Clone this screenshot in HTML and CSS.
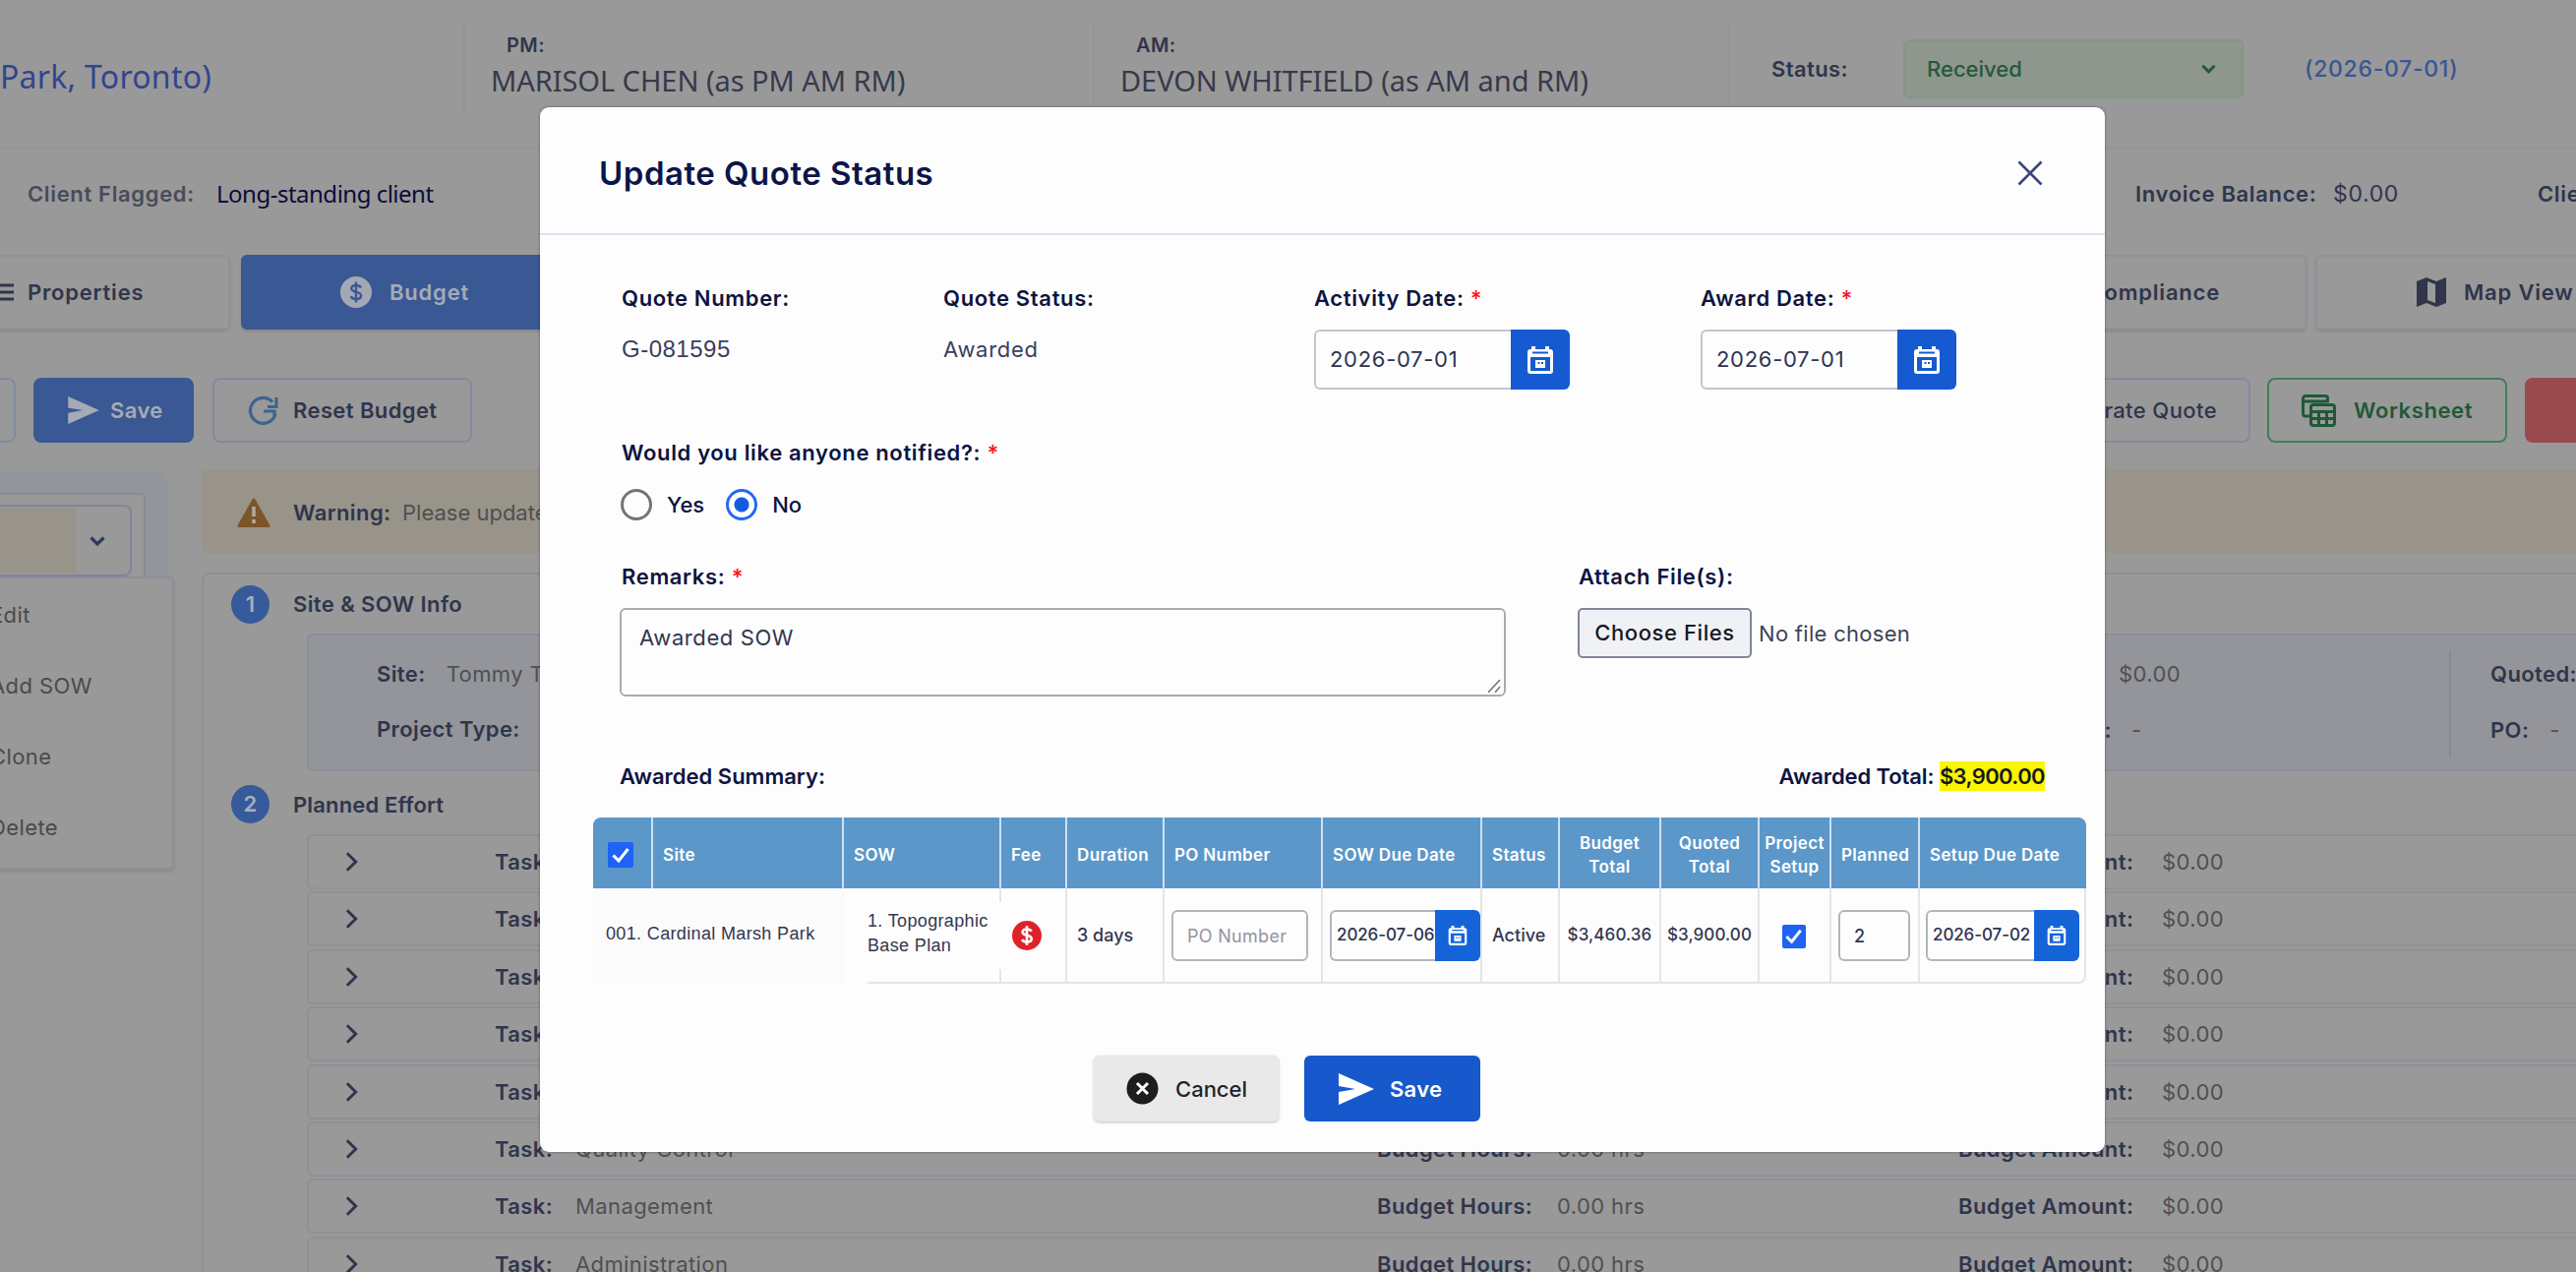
FILE: index.html
```
<!DOCTYPE html>
<html lang="en">
<head>
  <meta charset="UTF-8">
  <meta name="viewport" content="width=device-width, initial-scale=1.0">
  <title>Update Quote Status</title>
  <link rel="stylesheet" href="styles.css">
</head>
<body>
  <!-- icons -->
  <svg class="sprite" width="0" height="0">
    <symbol id="i-calendar" viewBox="0 0 26 28">
      <path fill="#fff" fill-rule="evenodd" d="M4 3V0h4v3h10V0h4v3h1a3 3 0 0 1 3 3v19a3 3 0 0 1-3 3H3a3 3 0 0 1-3-3V6a3 3 0 0 1 3-3zM3 11v14h20V11zM5 5.500v2h16v-2z"/>
      <path fill="#fff" fill-rule="evenodd" d="M8 14h10v8H8zM10.500 16v2h2v-2zM14 16v2h2v-2z"/>
    </symbol>
    <symbol id="i-send" viewBox="0 0 36 32">
      <path fill="currentColor" d="M0 0 36 16 0 32V19l17-3L0 13z"/>
    </symbol>
    <symbol id="i-check" viewBox="0 0 24 24">
      <path fill="none" stroke="#fff" stroke-width="3" d="M4.500 12.500 10 18 19.500 6"/>
    </symbol>
    <symbol id="i-down" viewBox="0 0 16 10">
      <path fill="none" stroke="currentColor" stroke-width="3.200" d="M1.500 1.500 8 8l6.500-6.500"/>
    </symbol>
    <symbol id="i-right" viewBox="0 0 14 22">
      <path fill="none" stroke="currentColor" stroke-width="3.200" d="M2 1.500 11.500 11 2 20.500"/>
    </symbol>
  </svg>

  <div class="page">
    <header class="topbar">
      <div class="topbar__site">Park, Toronto)</div>
      <div class="topbar__person">
        <span class="topbar__role">PM:</span>
        <span class="topbar__name">MARISOL CHEN (as PM AM RM)</span>
      </div>
      <div class="topbar__person">
        <span class="topbar__role">AM:</span>
        <span class="topbar__name">DEVON WHITFIELD (as AM and RM)</span>
      </div>
      <div class="topbar__status">
        <b>Status:</b>
        <div class="status-select">Received <svg width="15" height="10"><use href="#i-down"/></svg></div>
        <span class="topbar__date">(2026-07-01)</span>
      </div>
    </header>

    <div class="infobar">
      <b class="infobar__flag">Client Flagged:</b>
      <span class="infobar__client">Long-standing client</span>
      <b>Invoice Balance:</b>
      <span class="infobar__amount">$0.00</span>
      <b>Client</b>
    </div>

    <nav class="tabs">
      <div class="tab tab--properties">
        <svg width="24" height="18"><path stroke="currentColor" stroke-width="3" d="M0 2h24M0 9h24M0 16h24"/></svg>
        Properties
      </div>
      <div class="tab tab--active">
        <svg width="32" height="32" viewBox="0 0 32 32">
          <circle cx="16" cy="16" r="16" fill="#a3a9b3"/>
          <path fill="none" stroke="#3a5894" stroke-width="2.400" d="M21 11.500c-.8-1.800-2.600-2.500-5-2.500-2.800 0-4.700 1.200-4.700 3.300 0 4.800 9.800 2.200 9.800 7.200 0 2.200-2.200 3.500-5.100 3.500-2.600 0-4.500-1-5.200-2.800M16 5.500v21"/>
        </svg>
        Budget
      </div>
      <div class="tab tab--compliance">Compliance</div>
      <div class="tab tab--map">
        <svg width="30" height="30" viewBox="0 0 30 30">
          <path fill="currentColor" fill-rule="evenodd" d="M0 4 10 0l10 4 10-4v26l-10 4-10-4-10 4zM11 4v19l8 3V7z"/>
        </svg>
        Map View
      </div>
    </nav>

    <div class="toolbar">
      <div class="tool tool--stub"></div>
      <div class="tool tool--save"><svg width="34" height="28"><use href="#i-send"/></svg>Save</div>
      <div class="tool tool--reset">
        <svg width="31" height="31" viewBox="0 0 31 31">
          <path fill="none" stroke="#3c648f" stroke-width="3.200" d="M25 6.500A13 13 0 1 0 28 19M29 2v9.500h-9M16 16h11v5"/>
        </svg>
        Reset Budget
      </div>
      <div class="tool tool--quote">Generate Quote</div>
      <div class="tool tool--worksheet">
        <svg width="35" height="33" viewBox="0 0 35 33">
          <path fill="none" stroke="currentColor" stroke-width="3" d="M8 22H4a2.500 2.500 0 0 1-2.500-2.500V4A2.500 2.500 0 0 1 4 1.500h20A2.500 2.500 0 0 1 26.500 4v4M1.500 7h25"/>
          <path fill="none" stroke="currentColor" stroke-width="3" d="M12 10.500h19a2.500 2.500 0 0 1 2.500 2.500v16a2.500 2.500 0 0 1-2.500 2.500H12A2.500 2.500 0 0 1 9.500 29V13a2.500 2.500 0 0 1 2.500-2.500zM9.500 17.500h24M9.500 24.500h24M17.500 17v14M25.500 17v14"/>
        </svg>
        Worksheet
      </div>
      <div class="tool tool--danger"></div>
    </div>

    <div class="main">
      <aside class="side">
        <div class="side__box">
          <div class="side__select">
            <div class="side__value"></div>
            <svg width="16" height="10"><use href="#i-down"/></svg>
          </div>
        </div>
        <ul class="side__menu">
          <li>Edit</li>
          <li>Add SOW</li>
          <li>Clone</li>
          <li>Delete</li>
        </ul>
      </aside>

      <section class="content">
        <div class="warning">
          <svg width="34" height="30" viewBox="0 0 34 30">
            <path fill="#7c552a" stroke="#7c552a" stroke-width="3" stroke-linejoin="round" d="M17 2 32 28.500H2z"/>
            <path stroke="#b3aa9c" stroke-width="3.600" d="M17 9v10M17 22v4"/>
          </svg>
          <b>Warning:</b>
          <span>Please update</span>
        </div>

        <div class="card">
          <h3 class="card__title"><i>1</i>Site &amp; SOW Info</h3>
          <div class="site">
            <div class="site__line"><b>Site:</b><span>Tommy T</span></div>
            <div class="site__line"><b>Project Type:</b><span>-</span></div>
            <div class="site__mid">
              <div><b></b><span>$0.00</span></div>
              <div><b>Date:</b><span class="dash">-</span></div>
            </div>
            <div class="site__last">
              <div><b>Quoted:</b></div>
              <div><b>PO:</b><span>-</span></div>
            </div>
          </div>

          <h3 class="card__title card__title--effort"><i>2</i>Planned Effort</h3>
          <div class="tasks">
            <div class="task"><svg width="13" height="22"><use href="#i-right"/></svg><b>Task:</b><span></span><b></b><span></span><b>Budget Amount:</b><span>$0.00</span></div>
            <div class="task"><svg width="13" height="22"><use href="#i-right"/></svg><b>Task:</b><span></span><b></b><span></span><b>Budget Amount:</b><span>$0.00</span></div>
            <div class="task"><svg width="13" height="22"><use href="#i-right"/></svg><b>Task:</b><span></span><b></b><span></span><b>Budget Amount:</b><span>$0.00</span></div>
            <div class="task"><svg width="13" height="22"><use href="#i-right"/></svg><b>Task:</b><span></span><b></b><span></span><b>Budget Amount:</b><span>$0.00</span></div>
            <div class="task"><svg width="13" height="22"><use href="#i-right"/></svg><b>Task:</b><span></span><b></b><span></span><b>Budget Amount:</b><span>$0.00</span></div>
            <div class="task"><svg width="13" height="22"><use href="#i-right"/></svg><b>Task:</b><span>Quality Control</span><b>Budget Hours:</b><span>0.00 hrs</span><b>Budget Amount:</b><span>$0.00</span></div>
            <div class="task"><svg width="13" height="22"><use href="#i-right"/></svg><b>Task:</b><span>Management</span><b>Budget Hours:</b><span>0.00 hrs</span><b>Budget Amount:</b><span>$0.00</span></div>
            <div class="task"><svg width="13" height="22"><use href="#i-right"/></svg><b>Task:</b><span>Administration</span><b>Budget Hours:</b><span>0.00 hrs</span><b>Budget Amount:</b><span>$0.00</span></div>
          </div>
        </div>
      </section>
    </div>
  </div>

  <div class="modal" role="dialog">
    <div class="modal__header">
      <h2 class="modal__title">Update Quote Status</h2>
      <svg class="modal__close" width="26" height="26" viewBox="0 0 26 26">
        <path stroke="#3a4676" stroke-width="2.600" d="M1.500 1.500l23 23M24.500 1.500l-23 23"/>
      </svg>
    </div>

    <div class="modal__body">
      <div class="fields">
        <div>
          <div class="label">Quote Number:</div>
          <div class="value value--number">G-081595</div>
        </div>
        <div>
          <div class="label">Quote Status:</div>
          <div class="value">Awarded</div>
        </div>
        <div>
          <div class="label">Activity Date: <em>*</em></div>
          <div class="date"><span>2026-07-01</span><i><svg width="26" height="28"><use href="#i-calendar"/></svg></i></div>
        </div>
        <div>
          <div class="label">Award Date: <em>*</em></div>
          <div class="date"><span>2026-07-01</span><i><svg width="26" height="28"><use href="#i-calendar"/></svg></i></div>
        </div>
      </div>

      <div class="notify">
        <div class="label">Would you like anyone notified?: <em>*</em></div>
        <div class="radios">
          <span class="radio"></span>Yes
          <span class="radio radio--on"></span>No
        </div>
      </div>

      <div class="remarks">
        <div>
          <div class="label">Remarks: <em>*</em></div>
          <div class="textarea">
            Awarded SOW
            <svg width="13" height="13"><path stroke="#777" stroke-width="1.600" d="M0 13 12 0M7 13l5-6"/></svg>
          </div>
        </div>
        <div>
          <div class="label label--files">Attach File(s):</div>
          <div class="file"><span class="file__btn">Choose Files</span>No file chosen</div>
        </div>
      </div>

      <div class="summary">
        <span>Awarded Summary:</span>
        <span class="summary__total">Awarded Total: <mark>$3,900.00</mark></span>
      </div>

      <table class="awards">
        <colgroup>
          <col class="c-check"><col class="c-site"><col class="c-sow"><col class="c-fee"><col class="c-dur"><col class="c-po"><col class="c-due">
          <col class="c-status"><col class="c-budget"><col class="c-quoted"><col class="c-setup"><col class="c-planned"><col class="c-sdue">
        </colgroup>
        <thead>
          <tr>
            <th class="awards__all"><span class="checkbox"><svg width="24" height="24"><use href="#i-check"/></svg></span></th>
            <th>Site</th>
            <th>SOW</th>
            <th>Fee</th>
            <th>Duration</th>
            <th>PO Number</th>
            <th>SOW Due Date</th>
            <th>Status</th>
            <th class="center">Budget<br>Total</th>
            <th class="center">Quoted<br>Total</th>
            <th class="center">Project<br>Setup</th>
            <th>Planned</th>
            <th>Setup Due Date</th>
          </tr>
        </thead>
        <tbody>
          <tr>
            <td class="awards__site" colspan="2">001. Cardinal Marsh Park</td>
            <td class="awards__sow">1. Topographic<br>Base Plan</td>
            <td class="awards__fee">
              <svg width="30" height="30" viewBox="0 0 32 32">
                <circle cx="16" cy="16" r="16" fill="#df2229"/>
                <path fill="none" stroke="#fff" stroke-width="2.800" d="M21 11.500c-.8-1.800-2.600-2.500-5-2.500-2.800 0-4.700 1.200-4.700 3.300 0 4.800 9.800 2.200 9.800 7.200 0 2.200-2.200 3.500-5.100 3.500-2.600 0-4.500-1-5.200-2.800M16 5.500v21"/>
              </svg>
            </td>
            <td>3 days</td>
            <td class="tight"><div class="input input--po">PO Number</div></td>
            <td class="tight"><div class="date date--small"><span>2026-07-06</span><i><svg width="20" height="20"><use href="#i-calendar"/></svg></i></div></td>
            <td>Active</td>
            <td class="center money">$3,460.36</td>
            <td class="center money">$3,900.00</td>
            <td class="center"><span class="checkbox checkbox--row"><svg width="23" height="23"><use href="#i-check"/></svg></span></td>
            <td class="tight"><div class="input input--planned">2</div></td>
            <td class="tight"><div class="date date--small date--setup"><span>2026-07-02</span><i><svg width="20" height="20"><use href="#i-calendar"/></svg></i></div></td>
          </tr>
        </tbody>
      </table>

      <div class="actions">
        <div class="btn btn--cancel">
          <svg width="33" height="33" viewBox="0 0 33 33"><circle cx="16.500" cy="16.500" r="16" fill="#1d1d20"/><path stroke="#fff" stroke-width="3" d="M11 11l11 11M22 11 11 22"/></svg>
          Cancel
        </div>
        <div class="btn btn--save"><svg width="36" height="32"><use href="#i-send"/></svg>Save</div>
      </div>
    </div>
  </div>
</body>
</html>
```

FILE: styles.css
```
* {
  box-sizing: border-box;
}
body {
  margin: 0;
  background-color: #999;
  color: #30354c;
  font-family: Inter, "Liberation Sans", sans-serif;
  font-size: 22px;
  line-height: 30px;
}
b {
  font-weight: 600;
}
svg {
  display: block;
  flex: none;
}
.sprite {
  position: absolute;
}

.page {
  width: 2619px;
  height: 1293px;
  overflow: hidden;
  letter-spacing: .4px;
  white-space: nowrap;
}

/* top bar */
.topbar {
  display: grid;
  grid-template-columns: 471px 640px 646px 1fr;
  height: 151px;
  padding-top: 23px;
  border-bottom: 2px solid #92949b;
}
.topbar > div + div {
  height: 94px;
  border-left: 2px solid #92949a;
}
.topbar__site {
  padding-top: 40px;
  color: #33448f;
  font-family: "Noto Sans", sans-serif;
  font-size: 32px;
  letter-spacing: .25px;
}
.topbar__person {
  display: flex;
  flex-direction: column;
  padding: 8px 0 0 26px;
}
.topbar__role {
  padding-left: 16px;
  font-size: 20px;
  font-weight: 600;
}
.topbar__name {
  margin-top: 6px;
  color: #37394b;
  font-family: "Noto Sans", sans-serif;
  font-size: 29px;
  letter-spacing: -.05px;
}
.topbar__status {
  display: flex;
  align-items: center;
  padding-left: 42px;
}
.topbar__status b {
  width: 134px;
}
.status-select {
  display: flex;
  align-items: center;
  justify-content: space-between;
  width: 346px;
  height: 60px;
  padding: 0 26px 0 22px;
  border: 2px solid #839685;
  border-radius: 6px;
  background-color: #8f968e;
  color: #225a39;
  font-weight: 500;
  letter-spacing: 0;
}
.topbar__date {
  margin-left: 62px;
  color: #385794;
  font-size: 23px;
  font-weight: 500;
  letter-spacing: .7px;
}

.infobar {
  display: grid;
  grid-template-columns: 192px 1951px 201px 208px 1fr;
  align-items: center;
  height: 92px;
  padding-left: 28px;
  letter-spacing: .65px;
}
.infobar__flag {
  color: #484c59;
}
.infobar__client {
  color: #0d0b3a;
  font-family: "Noto Sans", sans-serif;
  font-size: 24px;
  letter-spacing: -.5px;
}
.infobar__amount {
  font-size: 23px;
}

/* tabs */
.tabs {
  display: flex;
  margin-top: 16px;
  letter-spacing: .8px;
}
.tab {
  display: flex;
  flex: none;
  align-items: center;
  height: 76px;
  border: 2px solid #919298;
  border-radius: 6px;
  box-shadow: 0 2px 3px rgba(0, 0, 0, .12);
  font-weight: 600;
}
.tab--properties {
  gap: 14px;
  width: 354px;
  margin-left: -120px;
  padding-left: 108px;
}
.tab--active {
  gap: 18px;
  width: 355px;
  margin-left: 11px;
  padding-left: 99px;
  border-color: #3a5894;
  background-color: #3a5894;
  color: #a5abb6;
}
.tab--compliance {
  justify-content: flex-end;
  width: 354px;
  margin-left: 1391px;
  padding-right: 86px;
}
.tab--map {
  gap: 18px;
  width: 354px;
  margin-left: 9px;
  padding-left: 101px;
}

.toolbar {
  display: flex;
  margin-top: 49px;
}
.tool {
  display: flex;
  flex: none;
  align-items: center;
  height: 66px;
  border: 2px solid #808ba0;
  border-radius: 8px;
  font-weight: 600;
}
.tool--stub {
  width: 66px;
  margin-left: -50px;
}
.tool--save {
  gap: 10px;
  width: 163px;
  margin-left: 18px;
  padding-left: 32px;
  border-color: #3a5894;
  background-color: #3a5894;
  color: #a5abb6;
}
.tool--reset {
  gap: 15px;
  width: 264px;
  margin-left: 19px;
  padding-left: 34px;
}
.tool--quote {
  justify-content: flex-end;
  width: 264px;
  margin-left: 1544px;
  padding-right: 32px;
  font-weight: 500;
}
.tool--worksheet {
  gap: 18px;
  width: 244px;
  margin-left: 17px;
  padding-left: 33px;
  border-color: #457c59;
  color: #1f5937;
  letter-spacing: .6px;
}
.tool--danger {
  width: 200px;
  margin-left: 18px;
  border-color: #994a4f;
  background-color: #994a4f;
}

/* main area */
.main {
  display: grid;
  grid-template-columns: 205px 1fr;
  margin-top: 27px;
}
.side {
  position: relative;
  width: 170px;
  height: 300px;
  margin-top: 2px;
  padding-top: 22px;
  border-radius: 0 6px 0 0;
  background-color: #92959c;
}
.side__box {
  width: 148px;
  height: 90px;
  padding-top: 10px;
  border: 2px solid #888c99;
  border-left: 0;
  border-radius: 0 4px 0 0;
  background-color: #999;
}
.side__select {
  display: flex;
  align-items: center;
  width: 134px;
  height: 73px;
  border: 2px solid #7e869e;
  border-left: 0;
  border-radius: 0 8px 8px 0;
  color: #2e3a63;
}
.side__value {
  width: 77px;
  height: 67px;
  margin-right: 14px;
  background-color: #99948a;
}
.side__menu {
  position: absolute;
  top: 107px;
  left: 0;
  width: 177px;
  height: 298px;
  margin: 0;
  padding: 22px 0 0;
  border: 2px solid #8c8f9a;
  border-left: 0;
  border-radius: 0 6px 6px 0;
  background-color: #999;
  box-shadow: 0 2px 4px rgba(0, 0, 0, .12);
  color: #4a4a4c;
  list-style: none;
}
.side__menu li {
  height: 72px;
  margin-left: -10px;
}

.warning {
  display: flex;
  align-items: center;
  height: 85px;
  padding: 2px 0 0 36px;
  border-radius: 8px 0 0 8px;
  background-color: #99948a;
}
.warning b {
  width: 111px;
  margin-left: 23px;
}
.warning span {
  color: #4f4f50;
  letter-spacing: 0;
}

.card {
  height: 800px;
  margin-top: 20px;
  border: 2px solid #8c8f9b;
  border-right: 0;
  border-radius: 8px 0 0 0;
}
.card__title {
  display: flex;
  align-items: center;
  height: 60px;
  margin: 0;
  padding-left: 28px;
  font-size: 22px;
  font-weight: 600;
}
.card__title i {
  width: 39px;
  height: 39px;
  margin-right: 24px;
  border-radius: 50%;
  background-color: #375a9b;
  color: #a8afbc;
  font-style: normal;
  line-height: 39px;
  text-align: center;
}
.card__title--effort {
  height: 64px;
  padding-top: 3px;
  letter-spacing: .15px;
}
.site {
  display: grid;
  grid-template-columns: 1743px 433px 1fr;
  grid-template-rows: 56px 56px;
  height: 140px;
  margin-left: 105px;
  padding-top: 12px;
  border: 2px solid #8a8e99;
  border-right: 0;
  border-radius: 6px 0 0 6px;
  background-color: #93959a;
}
.site span,
.task span {
  color: #4f5052;
}
.site__line {
  grid-column: 1;
  padding: 12px 0 0 69px;
}
.site__line b {
  margin-right: 21px;
}
.site__mid,
.site__last {
  grid-row: 1 / 3;
}
.site__mid {
  grid-column: 2;
  padding-top: 12px;
}
.site__mid div {
  display: flex;
  height: 57px;
}
.site__mid b {
  width: 90px;
  margin-right: 7px;
  text-align: right;
}
.site__mid .dash {
  margin-left: 13px;
}
.site__last {
  grid-column: 3;
  height: 107px;
  margin-top: 4px;
  padding: 8px 0 0 40px;
  border-left: 2px solid #868a97;
}
.site__last div {
  height: 57px;
}
.site__last span {
  margin-left: 21px;
}
.task {
  display: grid;
  grid-template-columns: 152px 82px 815px 183px 408px 207px 1fr;
  align-items: center;
  height: 56px;
  margin: 0 0 2.400px 105px;
  padding-left: 37px;
  border: 2px solid #8f9198;
  border-right: 0;
  border-radius: 6px 0 0 6px;
}

/* modal */
.modal {
  position: absolute;
  top: 109px;
  left: 549px;
  width: 1591px;
  height: 1062px;
  border-radius: 9px;
  background-color: #fdfdfe;
  box-shadow: 0 0 3px rgba(0, 0, 0, .4);
  color: #0d1440;
  white-space: nowrap;
}
.modal__header {
  display: flex;
  align-items: center;
  justify-content: space-between;
  height: 130px;
  padding: 5px 63px 0 60px;
  border-bottom: 2px solid #dce2f1;
}
.modal__title {
  margin: 0;
  color: #0c1549;
  font-size: 33px;
  font-weight: 600;
  letter-spacing: .5px;
}
.modal__body {
  padding: 49px 0 0 54px;
}
.label {
  font-weight: 600;
  letter-spacing: .65px;
}
.label em {
  color: #fb141c;
  font-style: normal;
}
.label--files {
  margin-left: -1px;
}
.value {
  margin-top: 22px;
  color: #3a3f5c;
  letter-spacing: .7px;
}
.value--number {
  font-family: "Liberation Sans", sans-serif;
  font-size: 24px;
  letter-spacing: .5px;
}
.fields {
  display: grid;
  grid-template-columns: 327px 377px 393px 1fr;
  padding-left: 29px;
}
.date {
  display: flex;
  width: 260px;
  height: 61px;
  margin-top: 17px;
  color: #2e3350;
}
.date span {
  flex: 1;
  padding: 13px 0 0 14px;
  border: 2px solid #c3c6cf;
  border-right: 0;
  border-radius: 6px 0 0 6px;
  letter-spacing: .7px;
}
.date i {
  display: flex;
  align-items: center;
  justify-content: center;
  width: 60px;
  border-radius: 0 6px 6px 0;
  background-color: #155ad0;
}

.notify {
  margin-top: 49px;
  padding-left: 29px;
}
.radios {
  display: flex;
  align-items: center;
  height: 32px;
  margin-top: 22px;
  font-weight: 500;
}
.radio {
  width: 32px;
  height: 32px;
  margin-right: 15px;
  margin-left: -1px;
  border: 3px solid #72747c;
  border-radius: 50%;
}
.radio--on {
  margin-left: 22px;
  border-color: #2468f5;
  background: radial-gradient(circle, #155be0 7px, #fff 8px);
}

.remarks {
  display: grid;
  grid-template-columns: 901px 1fr;
  gap: 73px;
  margin-top: 42px;
  padding-left: 27px;
}
.remarks .label {
  padding-left: 2px;
}
.textarea {
  display: flex;
  justify-content: space-between;
  height: 90px;
  margin-top: 17px;
  padding: 13px 3px 0 18px;
  border: 2px solid #a9abaf;
  border-radius: 6px;
  color: #32364f;
  letter-spacing: .6px;
}
.textarea svg {
  margin-top: 58px;
}
.file {
  display: flex;
  align-items: center;
  gap: 7px;
  margin-top: 17px;
  color: #3e4258;
  letter-spacing: .3px;
}
.file__btn {
  width: 177px;
  height: 51px;
  border: 2px solid #7f8698;
  border-radius: 5px;
  background-color: #f0f1f5;
  color: #17181f;
  font-weight: 500;
  letter-spacing: .6px;
  line-height: 46px;
  text-align: center;
}

.summary {
  display: flex;
  justify-content: space-between;
  margin-top: 66px;
  padding: 0 61px 0 27px;
  font-weight: 600;
}
.summary__total {
  letter-spacing: -.1px;
}
.summary mark {
  padding: 2px 0;
  background-color: #faf500;
  color: #17181f;
  letter-spacing: -.6px;
}

.awards {
  width: 1518px;
  margin-top: 27px;
  border-spacing: 0;
  table-layout: fixed;
  color: #33374f;
  font-size: 18px;
  line-height: 25px;
}
.c-check { width: 61px; }
.c-site { width: 194px; }
.c-sow { width: 160px; }
.c-fee { width: 67px; }
.c-dur { width: 99px; }
.c-po { width: 161px; }
.c-due { width: 162px; }
.c-status { width: 79px; }
.c-budget { width: 103px; }
.c-quoted { width: 100px; }
.c-setup { width: 73px; }
.c-planned { width: 90px; }
.c-sdue { width: 169px; }
.awards th {
  height: 72px;
  padding: 4px 0 0 10px;
  border-right: 2px solid #cfe0ef;
  background-color: #5c97c9;
  color: #fff;
  font-size: 17px;
  font-weight: 600;
  letter-spacing: .35px;
  line-height: 24px;
  text-align: left;
}
.awards th:first-child {
  padding-left: 15px;
  border-radius: 8px 0 0 0;
}
.awards th:last-child {
  border-right: 0;
  border-radius: 0 8px 0 0;
}
.awards td {
  height: 97px;
  padding: 0 0 0 10px;
  border-right: 2px solid #e4e5e8;
  border-bottom: 2px solid #e4e5e8;
  font-weight: 500;
}
.awards td:last-child {
  border-radius: 0 0 8px 0;
}
.awards .center {
  padding-left: 0;
  text-align: center;
}
.awards .tight {
  padding-left: 7px;
}
.awards .tight:last-child {
  padding-left: 6px;
}
.awards .awards__site {
  padding: 0 0 4px 13px;
  border: 0;
  background-color: #fbfbfc;
  font-family: "Liberation Sans", sans-serif;
  font-weight: 400;
  letter-spacing: .35px;
}
/* the separators only show in the corners of this cell */
.awards .awards__sow {
  padding: 0 0 5px 24px;
  border: 0;
  background:
    linear-gradient(#e4e5e8, #e4e5e8) 24px 100% / 100% 2px no-repeat,
    linear-gradient(#e4e5e8, #e4e5e8) 100% 0 / 2px 14px no-repeat,
    linear-gradient(#e4e5e8, #e4e5e8) 100% 100% / 2px 15px no-repeat;
  font-family: "Liberation Sans", sans-serif;
  font-weight: 400;
  letter-spacing: .35px;
}
.awards .awards__fee {
  padding-left: 11px;
}
.awards .money {
  font-size: 17px;
  letter-spacing: .1px;
}
.checkbox {
  display: inline-block;
  width: 26px;
  height: 26px;
  padding: 1px;
  border-radius: 2px;
  background-color: #1f62f5;
  vertical-align: middle;
}
.checkbox--row {
  width: 24px;
  height: 24px;
  margin-right: 2px;
  padding: 0;
}
.input {
  height: 52px;
  border: 2px solid #b3b5ba;
  border-radius: 6px;
  padding-left: 14px;
  line-height: 49px;
}
.input--po {
  width: 139px;
  color: #93959d;
  font-weight: 400;
  letter-spacing: .3px;
}
.input--planned {
  width: 73px;
}
.date--small {
  width: 153px;
  height: 52px;
  margin-top: 0;
  font-weight: 500;
}
.date--small span {
  width: 107px;
  flex: none;
  padding: 11px 0 0 5px;
  border-color: #b3b5ba;
  font-size: 17px;
  letter-spacing: -.1px;
}
.date--small i {
  width: 46px;
  background-color: #1464d8;
}
.date--setup {
  width: 156px;
}
.date--setup span {
  width: 110px;
}

.actions {
  display: flex;
  gap: 26px;
  margin-top: 73px;
  padding-left: 509px;
}
.btn {
  display: flex;
  align-items: center;
  height: 67px;
  border-radius: 6px;
  font-weight: 600;
}
.btn--cancel {
  gap: 17px;
  width: 188px;
  padding-left: 33px;
  background-color: #e9e9ea;
  box-shadow: 0 1px 3px rgba(0, 0, 0, .25);
  color: #222328;
  font-weight: 500;
}
.btn--save {
  gap: 16px;
  width: 179px;
  padding-left: 35px;
  background-color: #1759cc;
  color: #fff;
  letter-spacing: .3px;
}
```
